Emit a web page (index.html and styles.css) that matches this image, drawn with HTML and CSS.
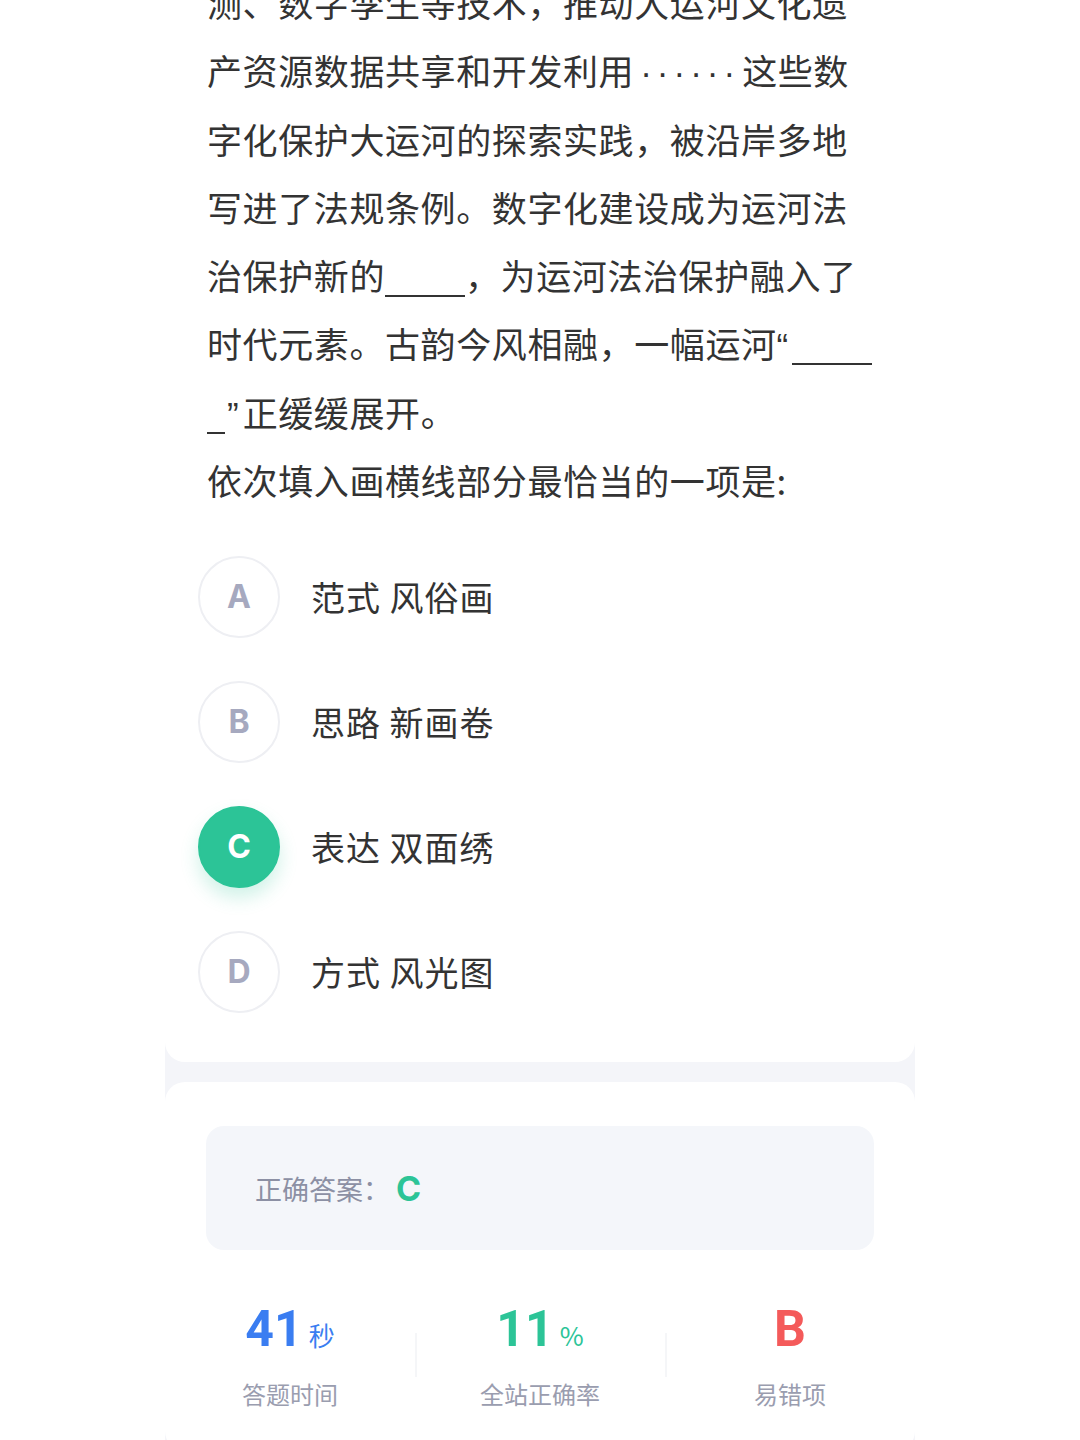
FILE: index.html
```html
<!DOCTYPE html>
<html lang="zh-CN">
<head>
<meta charset="UTF-8">
<meta name="viewport" content="width=device-width, initial-scale=1.0">
<title>题目解析</title>
<link rel="stylesheet" href="styles.css">
</head>
<body>
<div class="page">
    <div class="card question-card">
        <p class="stem">
            <span class="line">测、数字孪生等技术，推动大运河文化遗</span>
            <span class="line">产资源数据共享和开发利用<span class="dots">······</span>这些数</span>
            <span class="line">字化保护大运河的探索实践，被沿岸多地</span>
            <span class="line">写进了法规条例。数字化建设成为运河法</span>
            <span class="line">治保护新的<span class="blank"></span>，为运河法治保护融入了</span>
            <span class="line">时代元素。古韵今风相融，一幅运河<span class="quote">“</span><span class="blank"></span></span>
            <span class="line"><span class="blank short"></span><span class="quote">”</span>正缓缓展开。</span>
            <span class="line">依次填入画横线部分最恰当的一项是:</span>
        </p>

        <ul class="options">
            <li class="option">
                <span class="letter">A</span>
                <span class="option-text">范式 风俗画</span>
            </li>
            <li class="option">
                <span class="letter">B</span>
                <span class="option-text">思路 新画卷</span>
            </li>
            <li class="option selected">
                <span class="letter">C</span>
                <span class="option-text">表达 双面绣</span>
            </li>
            <li class="option">
                <span class="letter">D</span>
                <span class="option-text">方式 风光图</span>
            </li>
        </ul>
    </div>

    <div class="card result-card">
        <div class="answer">
            正确答案：<span class="answer-letter">C</span>
        </div>

        <div class="stats">
            <div class="stat">
                <div class="stat-value blue">41<span class="unit">秒</span></div>
                <div class="stat-label">答题时间</div>
            </div>
            <div class="stat">
                <div class="stat-value green">11<span class="unit">%</span></div>
                <div class="stat-label">全站正确率</div>
            </div>
            <div class="stat">
                <div class="stat-value red">B</div>
                <div class="stat-label">易错项</div>
            </div>
        </div>
    </div>
</div>
</body>
</html>
```

FILE: styles.css
```css
body {
    margin: 0;
    padding: 0;
    background-color: #fff;
    font-family: "Noto Sans CJK SC", "Noto Sans", sans-serif;
    color: #333;
}

.page {
    width: 750px;
    margin: -32px auto 0;
    background-color: #f4f5f9;
}

.card {
    background-color: #fff;
    border-radius: 20px;
}

.question-card {
    padding: 0 40px 28px 42px;
}

.stem {
    margin: 0;
    font-size: 35px;
    letter-spacing: 0.6px;
    line-height: 68.3px;
    color: #333;
}

.stem .line {
    display: block;
    height: 68.3px;
    white-space: nowrap;
}

.dots {
    margin: 0 2px 0 6px;
    font-family: "Liberation Sans", sans-serif;
    letter-spacing: 5px;
    line-height: 1;
}

.quote {
    font-family: "Liberation Sans", sans-serif;
    letter-spacing: 4px;
    line-height: 1;
}

.blank {
    display: inline-block;
    width: 80px;
    height: 0;
    border-bottom: 2px solid #333;
    vertical-align: -7px;
}

.blank.short {
    width: 18px;
    margin-right: 2px;
}

.options {
    list-style: none;
    margin: 20px 0 0;
    padding: 0;
}

.option {
    display: flex;
    align-items: center;
    height: 125px;
}

.letter {
    display: flex;
    align-items: center;
    justify-content: center;
    width: 78px;
    height: 78px;
    margin-left: -9px;
    border: 2px solid #eeeff3;
    border-radius: 50%;
    font-family: "Inter", "Open Sans", sans-serif;
    font-weight: 700;
    font-size: 32px;
    color: #a6a9bf;
}

.option.selected .letter {
    background-color: #2cc497;
    border-color: #2cc497;
    color: #fff;
    box-shadow: 0 10px 18px rgba(44, 196, 151, 0.22);
}

.option-text {
    margin-left: 31px;
    font-size: 34px;
    letter-spacing: 1px;
    color: #333;
}

.result-card {
    margin-top: 20px;
    padding: 44px 0 40px;
}

.answer {
    margin: 0 41px;
    height: 124px;
    display: flex;
    align-items: center;
    padding-left: 49px;
    background-color: #f4f6fa;
    border-radius: 18px;
    font-size: 27px;
    color: #8c90a4;
}

.answer-letter {
    margin-left: 6px;
    font-family: "Inter", "Open Sans", sans-serif;
    font-weight: 700;
    font-size: 34px;
    color: #2cc497;
}

.stats {
    display: grid;
    grid-template-columns: repeat(3, 1fr);
    margin-top: 49px;
}

.stat {
    position: relative;
    text-align: center;
}

.stat + .stat::before {
    content: "";
    position: absolute;
    left: 0;
    top: 34px;
    height: 44px;
    border-left: 2px solid #f5f6f8;
}

.stat-value {
    height: 60px;
    line-height: 60px;
    font-family: "Roboto", "Liberation Sans", sans-serif;
    font-weight: 700;
    font-size: 50px;
}

.unit {
    margin-left: 6px;
    font-family: "Noto Sans CJK SC", sans-serif;
    font-weight: 400;
    font-size: 26px;
}

.blue {
    color: #3a7df1;
}

.green {
    color: #2cc497;
}

.red {
    color: #f45a5a;
}

.stat-label {
    margin-top: 18px;
    line-height: 34px;
    font-size: 24px;
    color: #9a9daf;
}
```
